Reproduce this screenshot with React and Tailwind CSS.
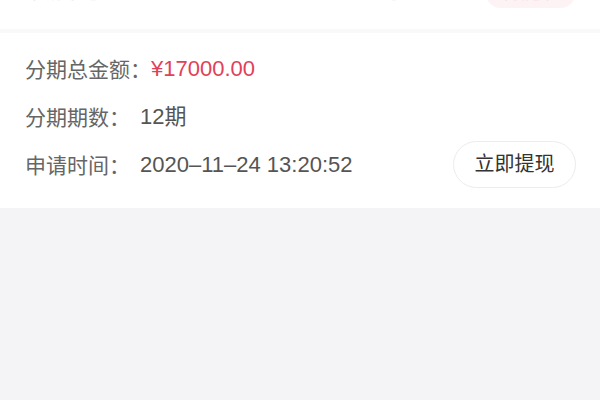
import React from 'react';

const font = { fontFamily: '"Liberation Sans", "Noto Sans CJK SC", sans-serif' };

export default function App() {
  return (
    <div className="w-[600px] h-[400px] bg-[#f4f4f6] overflow-hidden" style={font}>
      <div className="bg-white">
        <div className="h-[29px] overflow-hidden relative">
          <div className="absolute top-[-21px] left-[25px] right-[25px] flex justify-between items-center text-[19px] text-[#e8e8e8]">
            <span>申请单号：2020112413205200000000001号</span>
            <span className="px-4 rounded-full bg-[#fdf3f5] text-[#f6ccd4]">待提现</span>
          </div>
        </div>
        <div className="h-[4px] bg-[#f9f9f9]" />
        <div className="px-[25px] pt-[12px] pb-[19px] text-[21px] leading-none">
          <div className="flex items-center h-[48px]">
            <span className="text-[#666]">分期总金额：</span>
            <span className="text-[#e2405a] text-[22px]">¥17000.00</span>
          </div>
          <div className="flex items-center h-[48px]">
            <span className="text-[#666]">分期期数：</span>
            <span className="text-[#555] ml-[10px] text-[22px]">12期</span>
          </div>
          <div className="flex items-center justify-between h-[48px]">
            <div className="flex items-center">
              <span className="text-[#666]">申请时间：</span>
              <span className="text-[#555] ml-[10px] text-[22px]">2020–11–24 13:20:52</span>
            </div>
            <button className="h-[47px] w-[123px] -mr-[1px] -mt-[2px] rounded-full border border-[#ececec] bg-white text-[#333] text-[20px]">
              立即提现
            </button>
          </div>
        </div>
      </div>
    </div>
  );
}
